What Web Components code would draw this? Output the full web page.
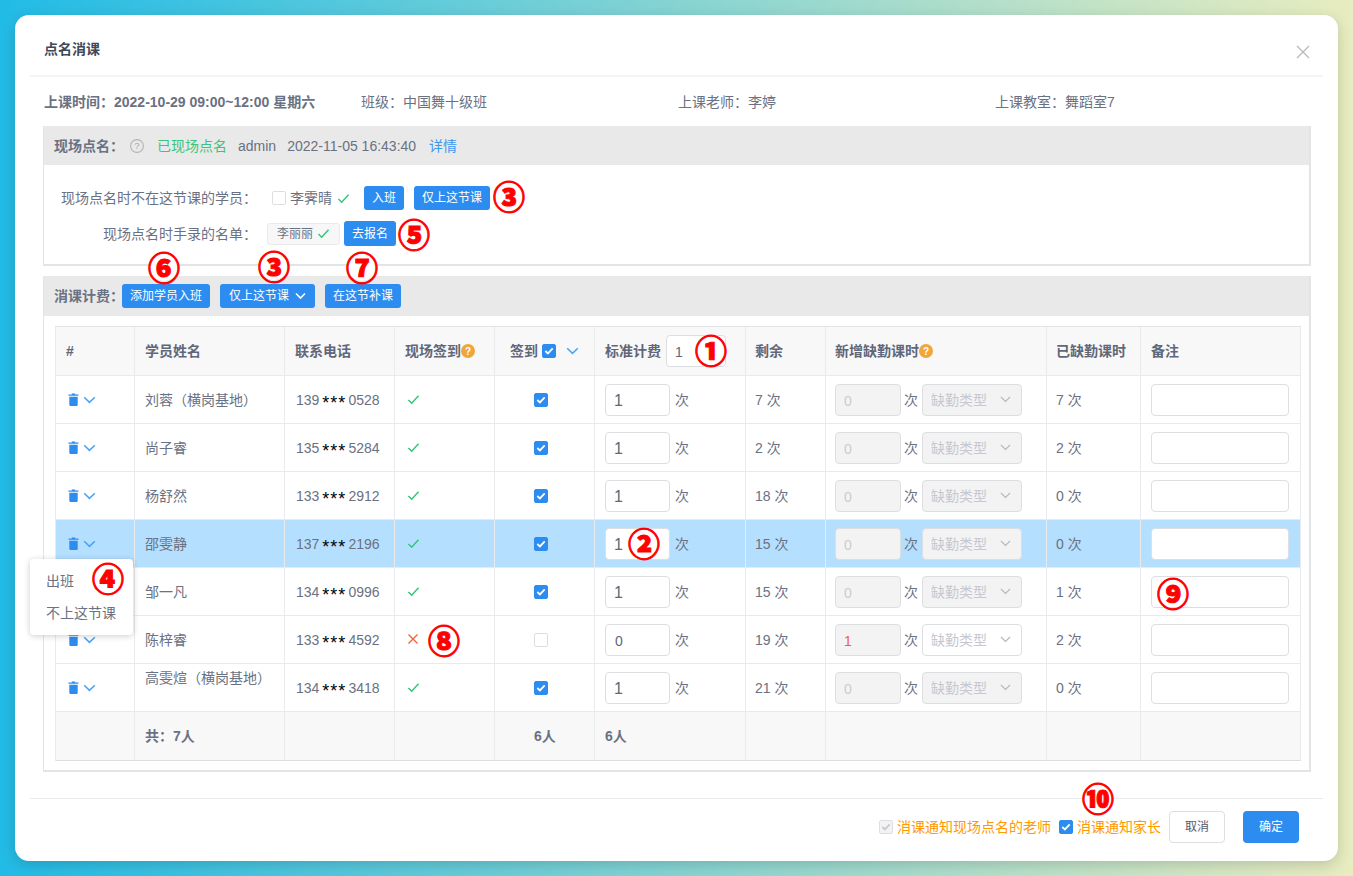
<!DOCTYPE html>
<html lang="zh"><head><meta charset="utf-8"><title>点名消课</title>
<style>
html,body{margin:0;height:100%;}
body{background:linear-gradient(90deg,#22bbe6 0%,#e8ecbf 100%);font:14px/20px "Liberation Sans","Noto Sans CJK SC",sans-serif;color:#6a7182;overflow:hidden;}
</style></head><body>
<x-modal>
  <span slot="title">点名消课</span>
  <x-info-row>
    <b>上课时间：2022-10-29 09:00~12:00 星期六</b><span>班级：中国舞十级班</span><span>上课老师：李婷</span><span>上课教室：舞蹈室7</span>
  </x-info-row>
  <x-panel>
    <x-bar slot="head"><b>现场点名：</b><x-ico name="help-gray" style="margin:0 13px 0 6px"></x-ico><span style="color:#3cc47c;margin-right:11px">已现场点名</span><span style="margin-right:11px">admin</span><span style="margin-right:13px">2022-11-05 16:43:40</span><span style="color:#3c97ef">详情</span></x-bar>
    <x-roll-notes></x-roll-notes>
  </x-panel>
  <x-panel style="margin-top:10px">
    <x-bar slot="head" tall><b style="width:68px;flex:none">消课计费：</b><x-btn>添加学员入班</x-btn><x-btn style="margin-left:10px;width:95px">仅上这节课<x-ico name="chev-white" style="margin-left:6px"></x-ico></x-btn><x-btn style="margin-left:10px">在这节补课</x-btn></x-bar>
    <x-roster></x-roster>
  </x-panel>
  <x-notice slot="footer"></x-notice>
  <x-menu slot="over"></x-menu>
  <x-mark slot="over" cx="509" cy="195">③</x-mark>
  <x-mark slot="over" cx="414" cy="233">⑤</x-mark>
  <x-mark slot="over" cx="164" cy="266">⑥</x-mark>
  <x-mark slot="over" cx="274" cy="265">③</x-mark>
  <x-mark slot="over" cx="362" cy="266">⑦</x-mark>
  <x-mark slot="over" cx="711" cy="349">①</x-mark>
  <x-mark slot="over" cx="644" cy="542">②</x-mark>
  <x-mark slot="over" cx="108" cy="577">④</x-mark>
  <x-mark slot="over" cx="444" cy="639">⑧</x-mark>
  <x-mark slot="over" cx="1173" cy="592">⑨</x-mark>
  <x-mark slot="over" cx="1098" cy="797">⑩</x-mark>
</x-modal>
<script>
const ICONS={
 'check-green':'<svg width="13" height="11" viewBox="0 0 14 12"><path d="M1.5 6.5 5 10 12.5 2" fill="none" stroke="#35c47c" stroke-width="1.6"/></svg>',
 'cross-red':'<svg width="12" height="12" viewBox="0 0 12 12"><path d="M1.5 1.5 10.5 10.5M10.5 1.5 1.5 10.5" fill="none" stroke="#f0633f" stroke-width="1.4"/></svg>',
 'trash':'<svg width="11" height="13" viewBox="0 0 11 13"><path d="M3.8 1.6V.5h3.4v1.1h3.3v1.2H.5V1.6z" fill="#2d8cf0"/><path d="M1.3 3.7h8.4v8.1c0 .7-.4 1.1-1 1.1H2.3c-.6 0-1-.4-1-1.1z" fill="#2d8cf0"/></svg>',
 'chev-blue':'<svg width="13" height="8" viewBox="0 0 13 8"><path d="M1.2 1.2 6.5 6.4 11.8 1.2" fill="none" stroke="#4aa3f5" stroke-width="1.5"/></svg>',
 'chev-white':'<svg width="11" height="8" viewBox="0 0 11 8"><path d="M1 1.5 5.5 6 10 1.5" fill="none" stroke="#fff" stroke-width="1.6"/></svg>',
 'chev-gray':'<svg width="11" height="7" viewBox="0 0 11 7"><path d="M1 1 5.5 5.5 10 1" fill="none" stroke="#b5b8bf" stroke-width="1.2"/></svg>',
 'help-orange':'<svg width="14" height="14" viewBox="0 0 14 14"><circle cx="7" cy="7" r="7" fill="#f0a63a"/><text x="7" y="10.6" text-anchor="middle" font-size="10" font-weight="700" font-family="Liberation Sans" fill="#fff">?</text></svg>',
 'help-gray':'<svg width="14" height="14" viewBox="0 0 14 14"><circle cx="7" cy="7" r="6.4" fill="none" stroke="#b4b4b4" stroke-width="1.1"/><text x="7" y="10.4" text-anchor="middle" font-size="9.5" font-family="Liberation Sans" fill="#a8a8a8">?</text></svg>',
 'close':'<svg width="14" height="14" viewBox="0 0 14 14"><path d="M1 1 13 13M13 1 1 13" fill="none" stroke="#b9bbbe" stroke-width="1.4"/></svg>'
};
function def(name,css,html,setup){
  customElements.define(name,class extends HTMLElement{
    connectedCallback(){
      if(this.shadowRoot)return;
      const r=this.attachShadow({mode:'open'});
      r.innerHTML='<style>'+css+'</style>'+(typeof html==='function'?html(this):html);
      if(setup)setup(this,r);
    }
  });
}
def('x-ico',':host{display:inline-flex;align-items:center;flex:none}svg{display:block}',h=>ICONS[h.getAttribute('name')]||'');
def('x-modal',`
 :host{display:flex;flex-direction:column;position:relative;box-sizing:border-box;width:1323px;height:846px;margin:15px;background:#fff;border-radius:14px;box-shadow:0 4px 14px rgba(0,0,0,.16);}
 header{display:flex;align-items:center;justify-content:space-between;flex:none;height:52px;margin:0 15px;padding:8px 13px 0 14px;border-bottom:2px solid #f4f4f5;box-sizing:content-box;color:#3f4858;font-weight:700;}
 header x-ico{margin-top:6px}
 main{flex:1;padding:0 27px 0 28px;}
 footer{flex:none;height:56px;margin:0 15px;padding:0 24px 6px 0;border-top:1px solid #e8eaec;display:flex;justify-content:flex-end;align-items:center;}
`,`<header><slot name="title"></slot><x-ico name="close"></x-ico></header><main><slot></slot></main><footer><slot name="footer"></slot></footer><slot name="over"></slot>`);
def('x-info-row',`:host{display:grid;grid-template-columns:repeat(4,317px);align-items:center;height:49px;padding-left:1px}`,`<slot></slot>`);
def('x-panel',`:host{display:block;border:1px solid #e3e4e6;border-width:0 2px 2px 1px;}`,`<slot name="head"></slot><slot></slot>`);
def('x-bar',`:host{display:flex;align-items:center;height:39px;padding-left:10px;background:#e9e9e9;white-space:nowrap}:host([tall]){height:40px}`,`<slot></slot>`);
def('x-btn',`:host{display:inline-flex;align-items:center;justify-content:center;box-sizing:border-box;height:24px;padding:0 8px;background:#2d8cf0;color:#fff;border-radius:3px;font-size:12px;white-space:nowrap}
 :host([large]){height:32px;width:56px;border-radius:4px}
 :host([plain]){background:#fff;color:#515a6e;border:1px solid #dcdee2}`,`<slot></slot>`);
def('x-check',`:host{display:inline-flex;flex:none;box-sizing:border-box;width:14px;height:14px;border:1px solid #dcdee2;border-radius:2px;background:#fff;align-items:center;justify-content:center}
 :host([checked]){background:#2d8cf0;border-color:#2d8cf0}
 :host([disabled]){background:#f3f3f3;border-color:#dcdee2}
 svg{display:none}
 :host([checked]) svg{display:block}`,
 h=>`<svg width="10" height="8" viewBox="0 0 10 8"><path d="M1.3 4 3.9 6.4 8.7 1.4" fill="none" stroke="${h.hasAttribute('disabled')?'#c5c8ce':'#fff'}" stroke-width="1.8"/></svg>`);
def('x-field',`:host{display:inline-flex;align-items:center;box-sizing:border-box;height:32px;width:65px;padding:2px 0 0 8px;border:1px solid #dcdee2;border-radius:4px;background:#fff;color:#5f6778;font-size:16px;flex:none}
 :host([small]){font-size:14px;padding-left:9px}
 :host([disabled]){background:#f3f3f3;color:#ccc;font-size:14px}
 :host([alert]){color:#f25b4b}`,`<slot></slot>`);
def('x-select',`:host{display:inline-flex;align-items:center;justify-content:space-between;box-sizing:border-box;height:32px;width:100px;padding:0 10px 0 8px;border:1px solid #dcdee2;border-radius:4px;background:#f3f3f3;color:#c5c8ce;flex:none}
 :host([enabled]){background:#fff}`,`<slot></slot><x-ico name="chev-gray"></x-ico>`);
def('x-mark',`:host{position:absolute;display:flex;align-items:center;justify-content:center;width:30px;height:30px;color:#f00;font:900 32px/30px "Noto Sans CJK SC",sans-serif;border-radius:50%;background:radial-gradient(circle,#fff 68%,transparent 72%);-webkit-text-stroke:1px #f00}`,`<slot></slot>`,
 h=>{h.style.left=(+h.getAttribute('cx')-30)+'px';h.style.top=(+h.getAttribute('cy')-30)+'px';});
def('x-menu',`:host{position:absolute;left:15px;top:544px;width:103px;height:76px;box-sizing:border-box;padding:6px 0;background:#fff;border-radius:4px;box-shadow:0 1px 6px rgba(0,0,0,.2);font-size:14px;color:#6a7182}
 div{height:32px;line-height:32px;padding-left:16px}`,`<div>出班</div><div>不上这节课</div>`);
def('x-roll-notes',`:host{display:flex;flex-direction:column;background:#fff;height:99px;padding-top:21px;box-sizing:border-box}
 .r{display:flex;align-items:center;height:24px;white-space:nowrap}
 .r+.r{margin-top:11px;height:25px}
 .l{width:213px;text-align:right;flex:none}
 .tag{display:inline-flex;align-items:center;justify-content:center;gap:4px;box-sizing:border-box;width:73px;height:22px;margin-left:10px;background:#f7f7f7;border:1px solid #e8eaec;border-radius:3px;font-size:12px}
 x-check{margin-left:15px}`,
 `<div class="r"><span class="l">现场点名时不在这节课的学员：</span><x-check></x-check><span style="margin:0 5px 0 4px">李霁晴</span><x-ico name="check-green"></x-ico><x-btn style="margin-left:14px;width:40px">入班</x-btn><x-btn style="margin-left:10px;width:76px">仅上这节课</x-btn></div>
  <div class="r"><span class="l">现场点名时手录的名单：</span><span class="tag">李丽丽<x-ico name="check-green"></x-ico></span><x-btn style="margin-left:4px;width:52px;height:25px">去报名</x-btn></div>`);
def('x-notice',`:host{display:flex;align-items:center;color:#f90;font-size:14px;white-space:nowrap}
 x-check{margin-right:4px}`,
 `<x-check checked disabled></x-check><span>消课通知现场点名的老师</span><x-check checked style="margin-left:8px"></x-check><span>消课通知家长</span><x-btn large plain style="margin-left:8px">取消</x-btn><x-btn large style="margin-left:18px">确定</x-btn>`);
const STUDENTS=[
 ['刘蓉（横岗基地）','139','0528',1,1,'1','7 次','0','7 次'],
 ['尚子睿','135','5284',1,1,'1','2 次','0','2 次'],
 ['杨舒然','133','2912',1,1,'1','18 次','0','0 次'],
 ['邵雯静','137','2196',1,1,'1','15 次','0','0 次'],
 ['邹一凡','134','0996',1,1,'1','15 次','0','1 次'],
 ['陈梓睿','133','4592',0,0,'0','19 次','1','2 次'],
 ['高雯煊（横岗基地）','134','3418',1,1,'1','21 次','0','0 次']
];
def('x-roster',`:host{display:block;background:#fff;padding:10px 9px 9px 11px}
 table{border-collapse:separate;border-spacing:0;table-layout:fixed;width:1245px;border-top:1px solid #e3e4e8;border-left:1px solid #e8eaec}
 th,td{box-sizing:border-box;height:48px;padding:0 0 0 10px;border-right:1px solid #e8eaec;border-bottom:1px solid #e8eaec;text-align:left;vertical-align:middle;font-weight:400;white-space:nowrap;overflow:visible;color:#6a7182}
 th{height:49px;background:#f8f8f9;font-weight:700;color:#5f6778}
 tr.sel td{background:#b5dfff}
 tfoot td{height:49px;background:#f8f8f9;font-weight:700;border-bottom-color:#dcdee2}
 th.n,td.n{padding-left:9px}
 .flex{display:flex;align-items:center}
 .star{color:#000;font-size:18px;line-height:0;letter-spacing:1px;margin:0 2px 0 3px;position:relative;top:4px}
 .u{margin:0 5px}
 .ml{padding-left:39px}
 x-check{display:flex}
`,()=>{
 const ro=(s,i)=>{
  const dis=i!==5;
  return `<tr class="${i===3?'sel':''}">
  <td style="padding-left:9px"><div class="flex" style="padding-left:3px;gap:4px"><x-ico name="trash"></x-ico><x-ico name="chev-blue"></x-ico></div></td>
  <td>${i===6?s[0]+'<br>&nbsp;':s[0]}</td>
  <td style="padding-left:11px">${s[1]}<span class="star">***</span>${s[2]}</td>
  <td style="padding-left:12px">${s[3]?'<x-ico name="check-green"></x-ico>':'<x-ico name="cross-red"></x-ico>'}</td>
  <td class="ml"><x-check ${s[4]?'checked':''}></x-check></td>
  <td><div class="flex"><x-field ${i===5?'small':''}>${s[5]}</x-field><span class="u">次</span></div></td>
  <td class="n">${s[6]}</td>
  <td class="n"><div class="flex"><x-field disabled ${i===5?'alert':''} style="width:66px">${s[7]}</x-field><span style="margin:0 4px 0 3px">次</span><x-select ${dis?'':'enabled'}>缺勤类型</x-select></div></td>
  <td class="n">${s[8]}</td>
  <td><div class="flex"><x-field style="width:138px"></x-field></div></td></tr>`;};
 return `<table><colgroup><col style="width:79px"><col style="width:150px"><col style="width:110px"><col style="width:100px"><col style="width:100px"><col style="width:151px"><col style="width:80px"><col style="width:221px"><col style="width:94px"><col style="width:160px"></colgroup>
 <thead><tr><th>#</th><th>学员姓名</th><th>联系电话</th>
 <th><div class="flex">现场签到<x-ico name="help-orange"></x-ico></div></th>
 <th style="padding-left:15px"><div class="flex">签到<x-check checked style="margin:0 10px 0 4px"></x-check><x-ico name="chev-blue"></x-ico></div></th>
 <th><div class="flex">标准计费<x-field style="width:60px;margin-left:5px;font-size:14px;font-weight:400;padding-left:8px">1</x-field></div></th>
 <th class="n">剩余</th>
 <th class="n"><div class="flex">新增缺勤课时<x-ico name="help-orange"></x-ico></div></th>
 <th class="n">已缺勤课时</th><th>备注</th></tr></thead>
 <tbody>${STUDENTS.map(ro).join('')}</tbody>
 <tfoot><tr><td></td><td>共：7人</td><td></td><td></td><td style="padding-left:39px">6人</td><td>6人</td><td></td><td></td><td></td><td></td></tr></tfoot></table>`;
});
</script>
</body></html>
